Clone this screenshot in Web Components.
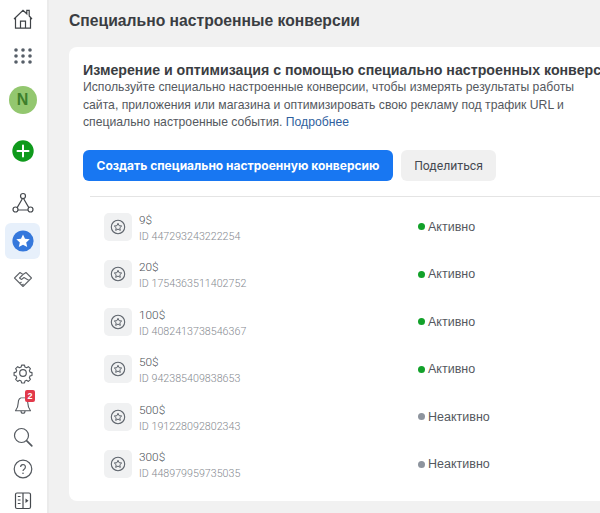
<!DOCTYPE html>
<html lang="ru">
<head>
<meta charset="utf-8">
<title>Специально настроенные конверсии</title>
<style>
  html, body { margin: 0; height: 100%; overflow: hidden; background: #f1f1f1; }
  body { font-family: "Liberation Sans", Arial, sans-serif; }
</style>
</head>
<body>
<ads-shell>
  <ads-sidebar slot="sidebar">
    <nav-item name="home"></nav-item>
    <nav-item name="grid"></nav-item>
    <nav-item name="avatar" style="margin-top:8px"></nav-item>
    <nav-item name="plus" style="margin-top:15px"></nav-item>
    <nav-item name="graph" style="margin-top:16px"></nav-item>
    <nav-item name="star" active style="margin-top:2px"></nav-item>
    <nav-item name="hands" style="margin-top:3px"></nav-item>
    <nav-item name="gear" compact style="margin-top:59px"></nav-item>
    <nav-item name="bell" compact badge="2"></nav-item>
    <nav-item name="search" compact></nav-item>
    <nav-item name="help" compact></nav-item>
    <nav-item name="panel" compact></nav-item>
  </ads-sidebar>
  <conversions-page heading="Специально настроенные конверсии">
    <conversion-row name="9$" conv-id="447293243222254" status="active"></conversion-row>
    <conversion-row name="20$" conv-id="1754363511402752" status="active"></conversion-row>
    <conversion-row name="100$" conv-id="4082413738546367" status="active"></conversion-row>
    <conversion-row name="50$" conv-id="942385409838653" status="active"></conversion-row>
    <conversion-row name="500$" conv-id="191228092802343" status="inactive"></conversion-row>
    <conversion-row name="300$" conv-id="448979959735035" status="inactive"></conversion-row>
  </conversions-page>
</ads-shell>

<script>
class AdsShell extends HTMLElement {
  constructor() {
    super();
    this.attachShadow({ mode: 'open' }).innerHTML = `
      <style>
        :host { display: flex; width: 600px; height: 513px; overflow: hidden; }
        ::slotted([slot="sidebar"]) { flex: none; }
      </style>
      <slot name="sidebar"></slot>
      <slot></slot>
    `;
  }
}

class AdsSidebar extends HTMLElement {
  constructor() {
    super();
    this.attachShadow({ mode: 'open' }).innerHTML = `
      <style>
        :host {
          display: flex;
          flex-direction: column;
          width: 47px;
          height: 513px;
          background: #fff;
          border-right: 2px solid #ebebeb;
          overflow: hidden;
        }
        .pad { height: 2px; flex: none; }
      </style>
      <div class="pad"></div>
      <slot></slot>
    `;
  }
}

const ICONS = {
  home: `<path d="M5 13 14 4.300l3.800 3.500V4.300h2.400v5.700L23 13M6.500 11.800v10.400h15V11.800M11.500 22.200v-7h5v7" fill="none" stroke="#3f4347" stroke-width="1.200"/>`,
  grid: [8, 14, 20].map((y) => [7, 14, 21].map((x) => `<circle cx="${x}" cy="${y}" r="1.800" fill="#565e68"/>`).join('')).join(''),
  plus: `<circle cx="14" cy="14" r="10.700" fill="#0f9a1c"/><path d="M14 8.500v11M8.500 14h11" stroke="#fff" stroke-width="2" stroke-linecap="round"/>`,
  graph: `<path d="M13.500 9.500 7.600 19.600M14.500 9.500l5.900 10.100M9 21h10" stroke="#45494e" stroke-width="1.200" fill="none"/><circle cx="14" cy="7" r="2.500" fill="#fff" stroke="#45494e" stroke-width="1.200"/><circle cx="6.500" cy="20.500" r="2.500" fill="#fff" stroke="#45494e" stroke-width="1.200"/><circle cx="21.500" cy="20.500" r="2.500" fill="#fff" stroke="#45494e" stroke-width="1.200"/>`,
  star: `<circle cx="14" cy="14" r="10.600" fill="#3578dc"/><path d="m14 7.400 2 4.300 4.700.5-3.500 3.200 1 4.700-4.200-2.400-4.200 2.400 1-4.700-3.500-3.200 4.700-.5z" fill="#fff"/>`,
  hands: `<path d="M11 6.500 5.500 12l2.500 2.500M17 6.500 22.500 12 20 14.500M11 6.500l3 2 3-2M8 14.500l6 6 6-6M14 8.500 10.500 12l2 1.500 2.500-2 5 3M11 17.500l1.500-1.500M13 19.500l1.500-1.500" fill="none" stroke="#62666b" stroke-width="1.100" stroke-linejoin="round"/>`,
  gear: `<g transform="translate(3.400 3.400) scale(.76)"><path d="M12.100 3.500h3.800l.6 2.600 2.200.9 2.300-1.400 2.700 2.700-1.400 2.300.9 2.200 2.600.6v3.800l-2.600.6-.9 2.200 1.400 2.300-2.700 2.700-2.300-1.400-2.200.9-.6 2.600h-3.800l-.6-2.600-2.200-.9-2.300 1.400-2.700-2.700 1.400-2.300-.9-2.200-2.600-.6v-3.800l2.600-.6.900-2.200-1.400-2.300 2.700-2.700 2.300 1.400 2.200-.9z" fill="none" stroke="#54595f" stroke-width="1.500" stroke-linejoin="round"/></g><circle cx="14" cy="14" r="3.300" fill="none" stroke="#54595f" stroke-width="1.200"/>`,
  bell: `<path d="M14 6.500c-3.200 0-4.800 2.500-4.800 5.500 0 4-1.100 5.600-2.700 7.800h15c-1.600-2.200-2.700-3.800-2.700-7.800 0-3-1.600-5.500-4.800-5.500zM12 20v.3a2 2 0 0 0 4 0V20" fill="none" stroke="#54595f" stroke-width="1.100" stroke-linejoin="round"/>`,
  search: `<circle cx="12.500" cy="12.500" r="7" fill="none" stroke="#54595f" stroke-width="1.200"/><path d="m17.800 17.800 5 5" stroke="#54595f" stroke-width="1.700" stroke-linecap="round"/>`,
  help: `<circle cx="14" cy="14" r="8.800" fill="none" stroke="#54595f" stroke-width="1.200"/><path d="M11.600 11.900a2.400 2.400 0 1 1 3.800 2c-.9.600-1.400 1.100-1.400 2.200" fill="none" stroke="#54595f" stroke-width="1.200"/><circle cx="14" cy="18.300" r=".8" fill="#54595f"/>`,
  panel: `<rect x="6.500" y="6" width="15" height="15.500" rx="1.500" fill="none" stroke="#45494e" stroke-width="1.200"/><path d="M14 6v15.500" stroke="#45494e" stroke-width="1.200"/><path d="M8.800 9.500h2.700M8.800 13h2.700M8.800 16.500h2.700" stroke="#45494e" stroke-width="1.100"/><path d="m16.500 11.500 3 2.300-3 2.300z" fill="#45494e"/>`,
};

class NavItem extends HTMLElement {
  constructor() {
    super();
    this.attachShadow({ mode: 'open' });
  }

  connectedCallback() {
    const name = this.getAttribute('name');
    const badge = this.getAttribute('badge');
    const graphic = name === 'avatar'
      ? '<span class="avatar">N</span>'
      : `<svg width="28" height="28" viewBox="0 0 28 28">${ICONS[name]}</svg>`;
    this.shadowRoot.innerHTML = `
      <style>
        :host {
          display: flex;
          flex: none;
          align-items: center;
          justify-content: center;
          height: 36px;
          position: relative;
          margin-left: 5px;
          margin-right: 7px;
          border-radius: 6px;
        }
        :host([compact]) { height: 32px; }
        :host([active]) { background: #e7f0fb; }
        svg { display: block; }
        .avatar {
          display: flex;
          align-items: center;
          justify-content: center;
          width: 28px;
          height: 28px;
          border-radius: 50%;
          background: #93c76f;
          color: #3d7f2c;
          font: bold 16px "Liberation Sans", Arial, sans-serif;
        }
        .badge {
          position: absolute;
          top: 1px;
          left: 20px;
          width: 10px;
          height: 12px;
          border-radius: 2px;
          background: #e2394b;
          color: #fff;
          font: bold 9px/12px "Liberation Sans", Arial, sans-serif;
          text-align: center;
        }
      </style>
      ${graphic}
      ${badge ? `<span class="badge">${badge}</span>` : ''}
    `;
  }
}

class ActionButton extends HTMLElement {
  constructor() {
    super();
    this.attachShadow({ mode: 'open' }).innerHTML = `
      <style>
        :host {
          display: flex;
          align-items: center;
          justify-content: center;
          height: 31px;
          border-radius: 6px;
          background: #f0f0f0;
          color: #444950;
          font: 12.200px "Roboto", "Liberation Sans", sans-serif;
          white-space: nowrap;
          box-sizing: border-box;
        }
        :host([primary]) {
          background: #1877f2;
          color: #fff;
          font: bold 12px "Inter", "Liberation Sans", sans-serif;
        }
      </style>
      <slot></slot>
    `;
  }
}

class ConversionRow extends HTMLElement {
  constructor() {
    super();
    this.attachShadow({ mode: 'open' });
  }

  connectedCallback() {
    const active = this.getAttribute('status') === 'active';
    this.shadowRoot.innerHTML = `
      <style>
        :host {
          display: flex;
          align-items: center;
          height: 47.500px;
          padding-left: 14px;
        }
        .tile {
          display: flex;
          align-items: center;
          justify-content: center;
          flex: none;
          width: 28px;
          height: 28px;
          border-radius: 5px;
          background: #f0f1f2;
        }
        .info { width: 279px; margin-left: 7px; flex: none; padding-top: 2px; }
        .name {
          font: 300 11.800px/16px "Roboto", "Liberation Sans", sans-serif;
          color: #4b4f56;
        }
        .id {
          font: 300 10.700px/14px "Roboto", "Liberation Sans", sans-serif;
          color: #85898f;
          margin-top: 2px;
        }
        .status {
          display: flex;
          align-items: center;
          gap: 3px;
          font: 12.500px "Liberation Sans", Arial, sans-serif;
          color: #54585e;
        }
        .dot {
          width: 7px;
          height: 7px;
          border-radius: 50%;
          background: ${active ? '#12a12a' : '#8d949e'};
        }
      </style>
      <div class="tile">
        <svg width="16" height="16" viewBox="0 0 16 16">
          <circle cx="8" cy="8" r="6.700" fill="none" stroke="#5f656d" stroke-width="1.100"/>
          <path d="m8 4.300 1.100 2.400 2.600.3-1.900 1.800.5 2.600L8 10.100l-2.300 1.300.5-2.600L4.300 7l2.600-.3z" fill="none" stroke="#5f656d" stroke-width="1"/>
        </svg>
      </div>
      <div class="info">
        <div class="name">${this.getAttribute('name')}</div>
        <div class="id">ID ${this.getAttribute('conv-id')}</div>
      </div>
      <div class="status"><span class="dot"></span>${active ? 'Активно' : 'Неактивно'}</div>
    `;
  }
}

class ConversionsPage extends HTMLElement {
  constructor() {
    super();
    this.attachShadow({ mode: 'open' });
  }

  connectedCallback() {
    this.shadowRoot.innerHTML = `
      <style>
        :host {
          display: block;
          flex: none;
          width: 620px;
          padding: 11px 0 0 20px;
          box-sizing: border-box;
          font-family: "Liberation Sans", Arial, sans-serif;
        }
        h1 {
          margin: 0 0 17px;
          font: bold 15.700px/19px "Liberation Sans", Arial, sans-serif;
          color: #3a3d42;
          white-space: nowrap;
        }
        .card {
          height: 454px;
          padding: 15px 0 0 14px;
          box-sizing: border-box;
          background: #fff;
          border-radius: 8px;
        }
        h2 {
          margin: 0;
          font: bold 14.200px/17px "Liberation Sans", Arial, sans-serif;
          color: #3a3d42;
          white-space: nowrap;
        }
        p {
          margin: 0;
          width: 510px;
          font: 12.200px/17.700px "Liberation Sans", Arial, sans-serif;
          color: #54585e;
          white-space: nowrap;
        }
        a { color: #2f5f9e; text-decoration: none; }
        .actions {
          display: grid;
          grid-template-columns: 310px 95px;
          gap: 8px;
          margin-top: 18px;
        }
        .rows {
          margin: 15px 0 0 7px;
          border-top: 1px solid #e4e4e4;
          padding-top: 6px;
        }
      </style>
      <h1>${this.getAttribute('heading')}</h1>
      <div class="card">
        <h2>Измерение и оптимизация с помощью специально настроенных конверсий</h2>
        <p>Используйте специально настроенные конверсии, чтобы измерять результаты работы<br>сайта, приложения или магазина и оптимизировать свою рекламу под трафик URL и<br>специально настроенные события. <a href="#">Подробнее</a></p>
        <div class="actions">
          <action-button primary>Создать специально настроенную конверсию</action-button>
          <action-button>Поделиться</action-button>
        </div>
        <div class="rows"><slot></slot></div>
      </div>
    `;
  }
}

customElements.define('ads-shell', AdsShell);
customElements.define('ads-sidebar', AdsSidebar);
customElements.define('nav-item', NavItem);
customElements.define('action-button', ActionButton);
customElements.define('conversion-row', ConversionRow);
customElements.define('conversions-page', ConversionsPage);
</script>
</body>
</html>
